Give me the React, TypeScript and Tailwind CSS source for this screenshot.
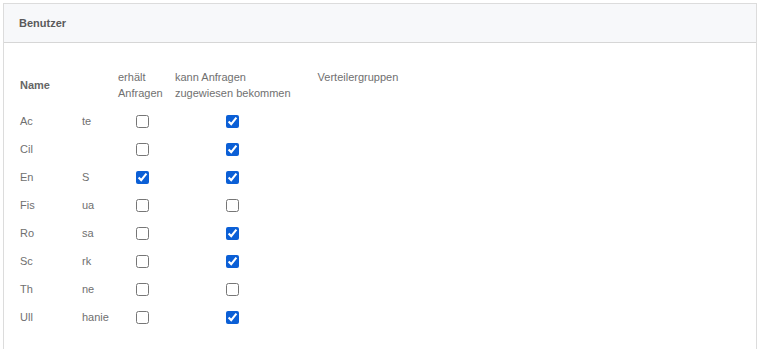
const users = [
  { first: "Ac", last: "te", receives: false, assignable: true },
  { first: "Cil", last: "", receives: false, assignable: true },
  { first: "En", last: "S", receives: true, assignable: true },
  { first: "Fis", last: "ua", receives: false, assignable: false },
  { first: "Ro", last: "sa", receives: false, assignable: true },
  { first: "Sc", last: "rk", receives: false, assignable: true },
  { first: "Th", last: "ne", receives: false, assignable: false },
  { first: "Ull", last: "hanie", receives: false, assignable: true },
];

function Box({ checked }: { checked: boolean }) {
  return (
    <input
      type="checkbox"
      defaultChecked={checked}
      className="m-0 block h-[13px] w-[13px] accent-[#0b5fd6]"
    />
  );
}

export default function App() {
  return (
    <div className="min-h-[349px] bg-white pl-[3px] pr-[6px] pt-[3px] font-['Liberation_Sans',Arial,sans-serif] text-[11px] text-[#707070]">
      <div className="min-h-[360px] border border-[#dcdcdc]">
        <div className="flex h-[39px] items-center border-b border-[#d6d6d6] bg-[#f7f8fa] px-[15px]">
          <span className="font-bold text-[#5a5a5a]">Benutzer</span>
        </div>

        <div className="px-4 pt-[26px]">
          <table className="border-collapse">
            <thead>
              <tr className="align-middle">
                <th className="w-[98px] pb-[6px] text-left font-bold leading-4 text-[#666]">Name</th>
                <th className="w-[57px] whitespace-nowrap pb-[6px] pr-2 text-left font-normal leading-4">
                  erhält<br />Anfragen
                </th>
                <th className="w-[142px] whitespace-nowrap pb-[6px] pr-[27px] text-left font-normal leading-4">
                  kann Anfragen<br />zugewiesen bekommen
                </th>
                <th className="pb-[6px] text-left align-top font-normal leading-4">Verteilergruppen</th>
              </tr>
            </thead>
            <tbody>
              {users.map((u, i) => (
                <tr key={i} className="h-[28px]">
                  <td className="align-middle">
                    <div className="flex">
                      <span className="w-[62px]">{u.first}</span>
                      <span>{u.last}</span>
                    </div>
                  </td>
                  <td className="pr-2 align-middle">
                    <div className="flex justify-center"><Box checked={u.receives} /></div>
                  </td>
                  <td className="pr-[27px] align-middle">
                    <div className="flex justify-center"><Box checked={u.assignable} /></div>
                  </td>
                  <td />
                </tr>
              ))}
            </tbody>
          </table>
        </div>
      </div>
    </div>
  );
}
